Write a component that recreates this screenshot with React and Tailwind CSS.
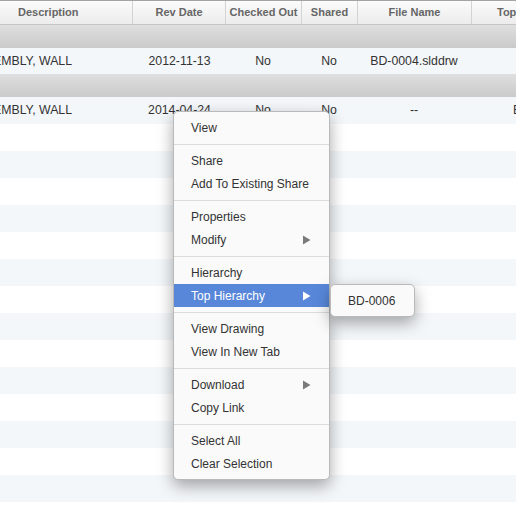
const cols = [
  { label: 'Description', w: 'w-[132px]' },
  { label: 'Rev Date', w: 'w-[93px]' },
  { label: 'Checked Out', w: 'w-[76px]' },
  { label: 'Shared', w: 'w-[56px]' },
  { label: 'File Name', w: 'w-[114px]' },
]

const rows = [
  { date: '2012-11-13', file: 'BD-0004.slddrw', top: '' },
  { date: '2014-04-24', file: '--', top: 'BD-0006' },
]

const menu = [
  ['View'],
  ['Share', 'Add To Existing Share'],
  ['Properties', 'Modify'],
  ['Hierarchy', 'Top Hierarchy'],
  ['View Drawing', 'View In New Tab'],
  ['Download', 'Copy Link'],
  ['Select All', 'Clear Selection'],
]

const withArrow = ['Modify', 'Top Hierarchy', 'Download']

function Arrow({ white }) {
  return (
    <svg width="8" height="10" viewBox="0 0 8 10" className="shrink-0">
      <path d="M0 0.5 L7.5 5 L0 9.5 Z" fill={white ? '#ffffff' : '#7b7b7b'} />
    </svg>
  )
}

function GroupRow() {
  return <div className="h-[23px] bg-gradient-to-b from-[#dfdfdf] to-[#cacaca]" />
}

function DataRow({ row, h }) {
  return (
    <div className={`flex ${h} items-center whitespace-nowrap bg-[#f4f7fa] text-[12.3px] text-[#333]`}>
      <div className="w-[132px] shrink-0 overflow-hidden">
        <span className="-ml-[7px] inline-block">EMBLY, WALL</span>
      </div>
      <div className="w-[93px] shrink-0 pl-[2px] text-center">{row.date}</div>
      <div className="w-[76px] shrink-0 text-center">No</div>
      <div className="w-[56px] shrink-0 text-center">No</div>
      <div className="w-[114px] shrink-0 text-center">{row.file}</div>
      <div className="min-w-0 flex-1 overflow-hidden pl-[42px]">{row.top}</div>
    </div>
  )
}

export default function App() {
  const filler = Array.from({ length: 15 }, (_, i) => i)

  return (
    <div className="relative h-[514px] w-[516px] overflow-hidden bg-white font-['Liberation_Sans',Arial,sans-serif]">
      {/* column header */}
      <div className="flex h-[25px] whitespace-nowrap border-t border-b border-t-[#a3a3a3] border-b-[#c6c6c6] bg-gradient-to-b from-[#fbfbfb] to-[#ececec] text-[11px] font-bold text-[#666]">
        {cols.map((c, i) => (
          <div
            key={c.label}
            className={`${c.w} flex shrink-0 items-center ${i === 0 ? 'pl-[18px]' : 'justify-center border-l border-[#d3d3d3]'}`}
          >
            {c.label}
          </div>
        ))}
        <div className="flex min-w-0 flex-1 items-center overflow-hidden border-l border-[#d3d3d3] pl-[25px]">Top Level</div>
      </div>

      <GroupRow />
      <DataRow row={rows[0]} h="h-[26px]" />
      <GroupRow />
      <DataRow row={rows[1]} h="h-[27px]" />

      {filler.map((i) => (
        <div key={i} className={`h-[27px] ${i % 2 ? 'bg-[#f4f7fa]' : 'bg-white'}`} />
      ))}

      {/* context menu */}
      <div className="absolute left-[173px] top-[111px] w-[157px] rounded-[5px] border border-[#b9b9b9] bg-[#fafafa] py-[4px] text-[12px] text-[#333] shadow-[0_6px_16px_rgba(0,0,0,0.35)]">
        {menu.map((group, gi) => (
          <div key={gi}>
            {gi > 0 && (
              <div className="flex h-[10px] items-center">
                <div className="h-px w-full bg-[#dcdcdc]" />
              </div>
            )}
            {group.map((item) => {
              const active = item === 'Top Hierarchy'
              return (
                <div
                  key={item}
                  className={`flex h-[23px] items-center justify-between pl-[17px] pr-[18px] ${active ? 'bg-[#5887da] text-white' : ''}`}
                >
                  <span>{item}</span>
                  {withArrow.includes(item) && <Arrow white={active} />}
                </div>
              )
            })}
          </div>
        ))}
      </div>

      {/* submenu */}
      <div className="absolute left-[330px] top-[284px] flex h-[33px] w-[85px] items-center rounded-[5px] border border-[#b9b9b9] bg-[#fafafa] pl-[17px] text-[12px] text-[#333] shadow-[0_6px_16px_rgba(0,0,0,0.35)]">
        BD-0006
      </div>
    </div>
  )
}
